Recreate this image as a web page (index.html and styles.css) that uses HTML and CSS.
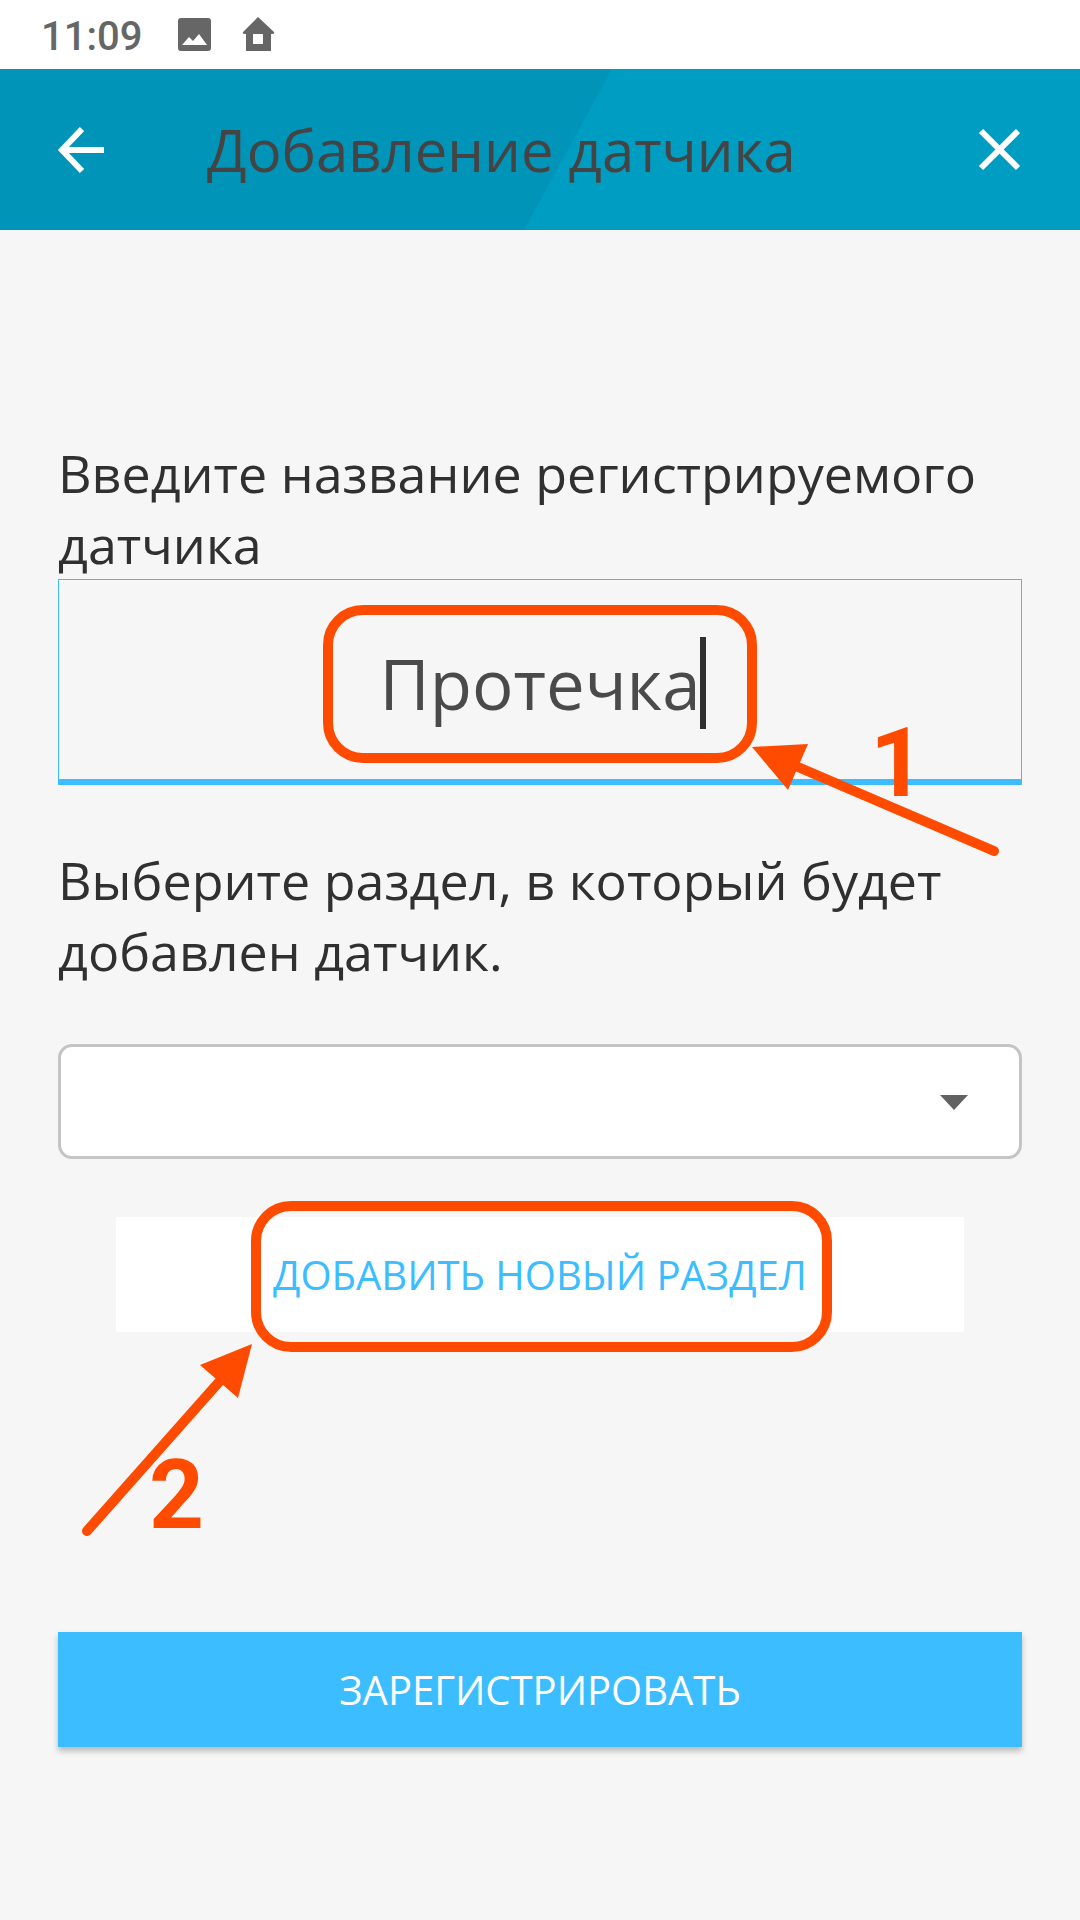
FILE: index.html
```html
<!DOCTYPE html>
<html lang="ru">

<head>
    <meta charset="UTF-8">
    <meta name="viewport" content="width=device-width, initial-scale=1.0">
    <title>Добавление датчика</title>
    <link rel="stylesheet" href="styles.css">
</head>

<body>
    <div class="status">
        <span class="time">11:09</span>
        <svg class="status-icon" viewBox="0 0 34 34">
            <path fill-rule="evenodd" d="M4 0h26a3 3 0 0 1 3 3v27a3 3 0 0 1-3 3H3a3 3 0 0 1-3-3V3a3 3 0 0 1 3-3zM4 27h25l-8-11-6 7-4-4z" />
        </svg>
        <svg class="status-icon" viewBox="0 0 34 34">
            <path fill-rule="evenodd" d="M16 -1L32 14q1 2-2 2h-1v17H4V16H3q-3 0-2-2zM11 16v10h10V16z" />
        </svg>
    </div>

    <header class="header">
        <svg class="header-bg" viewBox="0 0 1080 161" preserveAspectRatio="none">
            <path d="M0 0h612l-88 161H0z" />
        </svg>
        <button class="icon-btn" type="button" aria-label="Назад">
            <svg width="48" height="48" viewBox="0 0 48 48">
                <path d="M24 3L4 24l20 21M4 24h42" />
            </svg>
        </button>
        <h1 class="title">Добавление датчика</h1>
        <button class="icon-btn" type="button" aria-label="Закрыть">
            <svg width="42" height="42" viewBox="0 0 42 42">
                <path d="M1 2l37 37M38 2L1 39" />
            </svg>
        </button>
    </header>

    <form class="form">
        <label class="label" for="name">Введите название регистрируемого датчика</label>
        <div class="field">
            <input class="input" type="text" id="name" value="Протечка">
            <span class="caret"></span>
            <!-- шаг 1 -->
            <div class="mark mark-name"></div>
            <svg class="arrow arrow-name" width="250" height="130" viewBox="750 726 250 130">
                <path class="arrow-line" d="M798 767L994 851" />
                <path class="arrow-head" d="M752 747l56-3-20 46z" />
            </svg>
            <span class="num num-name">1</span>
        </div>

        <label class="label label-section" for="section">Выберите раздел, в который будет добавлен датчик.</label>
        <div class="select-wrap">
            <select class="select" id="section">
                <option></option>
            </select>
            <svg class="select-arrow" width="28" height="15" viewBox="0 0 28 15">
                <path d="M0 0h28L14 15z" />
            </svg>
        </div>

        <div class="add">
            <button class="btn btn-add" type="button">ДОБАВИТЬ НОВЫЙ РАЗДЕЛ</button>
            <!-- шаг 2 -->
            <div class="mark mark-add"></div>
            <svg class="arrow arrow-add" width="180" height="200" viewBox="76 1340 180 200">
                <path class="arrow-line" d="M219 1382L87 1531" />
                <path class="arrow-head" d="M252 1344l-52 21 38 33z" />
            </svg>
            <span class="num num-add">2</span>
        </div>

        <button class="btn btn-register" type="submit">ЗАРЕГИСТРИРОВАТЬ</button>
    </form>
</body>

</html>
```
FILE: styles.css
```css
* {
    margin: 0;
    padding: 0;
    box-sizing: border-box;
}

body {
    background-color: #f6f6f6;
    font-family: "Open Sans", "Noto Sans", sans-serif;
    color: #303030;
}

.status {
    display: flex;
    align-items: center;
    gap: 30px;
    height: 69px;
    padding-left: 41px;
    background-color: white;
}

.time {
    margin-right: 6px;
    padding-top: 4px;
    font: 500 40px Roboto, sans-serif;
    color: #666;
}

.status-icon {
    width: 34px;
    height: 34px;
    fill: #666;
    overflow: visible;
}

.header {
    position: relative;
    display: flex;
    align-items: center;
    height: 161px;
    padding: 0 58px;
    background-color: #009dc2;
}

.header-bg {
    position: absolute;
    left: 0;
    top: 0;
    width: 100%;
    height: 100%;
    fill: #0094b8;
}

.icon-btn {
    position: relative;
    display: flex;
    border: none;
    background: none;
}

.icon-btn svg {
    fill: none;
    stroke: white;
    stroke-width: 6px;
    overflow: visible;
}

.title {
    position: relative;
    flex: 1;
    padding-left: 101px;
    font-size: 58px;
    font-weight: 400;
    line-height: 79px;
    color: #444;
}

.form {
    display: flex;
    flex-direction: column;
    padding: 207px 58px 58px;
}

.label {
    font-size: 52px;
    line-height: 71px;
}

.label-section {
    margin: 59px 0 58px;
}

.field {
    position: relative;
}

.input {
    display: block;
    width: 100%;
    height: 206px;
    padding-top: 6px;
    border: 1px solid #3bbdff;
    border-bottom-width: 6px;
    background: none;
    font-family: inherit;
    font-size: 69px;
    text-align: center;
    color: #4a4a4a;
    outline: none;
}

.caret {
    position: absolute;
    left: calc(50% + 160px);
    top: 58px;
    width: 6px;
    height: 92px;
    background-color: #303030;
}

/* подсказки поверх формы */
.mark {
    position: absolute;
    border: 10px solid #ff4b00;
    border-radius: 40px;
    pointer-events: none;
}

.mark-name {
    left: calc(50% - 217px);
    top: 26px;
    width: 434px;
    height: 158px;
}

.mark-add {
    left: calc(50% - 289px);
    top: -16px;
    width: 581px;
    height: 151px;
}

.arrow {
    position: absolute;
    pointer-events: none;
}

.arrow-line {
    fill: none;
    stroke: #ff4b00;
    stroke-width: 10px;
    stroke-linecap: round;
}

.arrow-head {
    fill: #ff4b00;
}

.arrow-name {
    left: calc(50% + 210px);
    top: 147px;
}

.arrow-add {
    left: calc(50% - 464px);
    top: 123px;
}

.num {
    position: absolute;
    font: 700 96px/96px Roboto, sans-serif;
    color: #ff4b00;
}

.num-name {
    left: calc(50% + 330px);
    top: 136px;
}

.num-add {
    left: calc(50% - 391px);
    top: 230px;
}

.select-wrap {
    position: relative;
}

.select {
    display: block;
    width: 100%;
    height: 115px;
    padding: 0 80px 0 28px;
    border: 3px solid #c4c4c4;
    border-radius: 14px;
    background-color: white;
    font-family: inherit;
    font-size: 52px;
    appearance: none;
}

.select-arrow {
    position: absolute;
    right: 54px;
    top: 51px;
    fill: #616161;
    pointer-events: none;
}

.add {
    position: relative;
    margin: 58px 0 300px;
    padding: 0 58px;
}

.btn {
    width: 100%;
    height: 115px;
    border: none;
    font-family: inherit;
    font-size: 40px;
}

.btn-add {
    display: block;
    background-color: white;
    color: #3bbdff;
}

.btn-register {
    background-color: #3bbdff;
    color: white;
    box-shadow: 0 4px 6px rgba(0, 0, 0, 0.25);
}
```
